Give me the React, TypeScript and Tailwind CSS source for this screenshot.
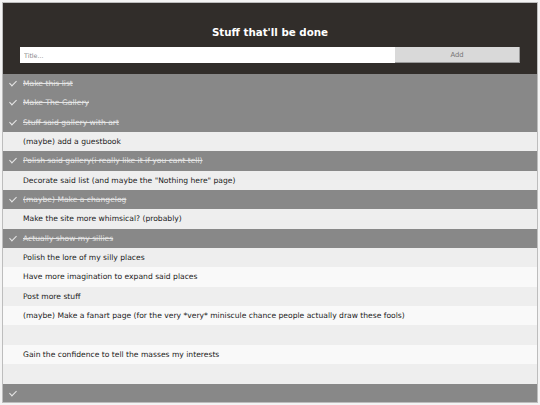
import { useState } from "react";

type Todo = { title: string; done: boolean };

const initialTodos: Todo[] = [
  { title: "Make this list", done: true },
  { title: "Make The Gallery", done: true },
  { title: "Stuff said gallery with art", done: true },
  { title: "(maybe) add a guestbook", done: false },
  { title: "Polish said gallery(i really like it if you cant tell)", done: true },
  { title: 'Decorate said list (and maybe the "Nothing here" page)', done: false },
  { title: "(maybe) Make a changelog", done: true },
  { title: "Make the site more whimsical? (probably)", done: false },
  { title: "Actually show my sillies", done: true },
  { title: "Polish the lore of my silly places", done: false },
  { title: "Have more imagination to expand said places", done: false },
  { title: "Post more stuff", done: false },
  { title: "(maybe) Make a fanart page (for the very *very* miniscule chance people actually draw these fools)", done: false },
  { title: "", done: false },
  { title: "Gain the confidence to tell the masses my interests", done: false },
  { title: "", done: false },
  { title: "", done: true },
];

function TodoRow({ todo, index, onToggle }: { todo: Todo; index: number; onToggle: () => void }) {
  const stripe = index % 2 === 1 ? "bg-[#eeeeee]" : "bg-[#f9f9f9]";
  return (
    <li
      onClick={onToggle}
      className={`relative flex h-[19.35px] cursor-pointer items-center pl-[20px] text-[7.6px] ${
        todo.done ? "bg-[#888888] text-[#e4e4e4] line-through" : `${stripe} text-[#222]`
      }`}
    >
      {todo.done && (
        <span className="absolute left-[8px] top-[5px] h-[7px] w-[4px] rotate-45 border-b border-r border-[#e8e8e8]" />
      )}
      {todo.title}
    </li>
  );
}

export default function App() {
  const [todos, setTodos] = useState(initialTodos);
  const [title, setTitle] = useState("");

  const toggle = (i: number) =>
    setTodos((prev) => prev.map((t, j) => (j === i ? { ...t, done: !t.done } : t)));

  const add = () => {
    if (!title.trim()) return;
    setTodos((prev) => [...prev, { title, done: false }]);
    setTitle("");
  };

  return (
    <div className="h-[405px] w-[540px] overflow-hidden bg-[#f4f4f4] p-[2px] font-['DejaVu_Sans',Verdana,sans-serif]">
      <div className="h-full overflow-hidden border border-[#bdbdbd]">
        <header className="flex h-[71px] flex-col items-center bg-[#312d2a] px-[17px] pt-[24px]">
          <h1 className="text-[10.3px] font-bold leading-none text-white">Stuff that'll be done</h1>
          <div className="mt-[10px] flex h-[16px] w-full">
            <input
              value={title}
              onChange={(e) => setTitle(e.target.value)}
              placeholder="Title..."
              className="h-full flex-1 bg-white px-[4px] text-[6.3px] text-[#333] outline-none placeholder:text-[#888]"
            />
            <button
              type="button"
              onClick={add}
              className="h-full w-[125px] border-b border-r border-[#9a9a9a] bg-[#d9d9d9] text-[6.8px] text-[#777]"
            >
              Add
            </button>
          </div>
        </header>
        <ul>
          {todos.map((todo, i) => (
            <TodoRow key={i} todo={todo} index={i} onToggle={() => toggle(i)} />
          ))}
        </ul>
      </div>
    </div>
  );
}
